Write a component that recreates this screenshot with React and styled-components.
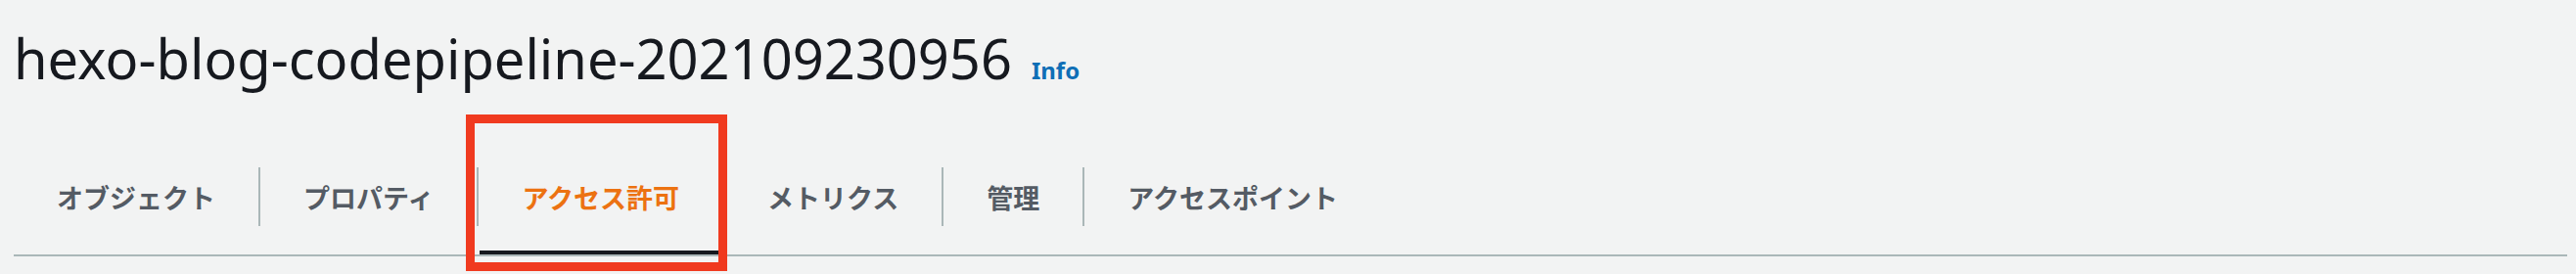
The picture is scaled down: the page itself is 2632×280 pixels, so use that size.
import { Fragment } from 'react';
import styled, { createGlobalStyle } from 'styled-components';

const GlobalStyle = createGlobalStyle`
html, body {
    margin: 0;
    padding: 0;
    background: #f2f3f3;
}
body {
    font-family: "Noto Sans", "Noto Sans CJK JP", sans-serif;
    color: #16191f;
}
`

const Page = styled.div`
width: 2632px;
height: 280px;
box-sizing: border-box;
padding: 0 9px 0 14px;
background: #f2f3f3;
`

const Header = styled.div`
display: flex;
align-items: baseline;
gap: 20px;
height: 142px;
padding-top: 19px;
box-sizing: border-box;
`

const Title = styled.h1`
margin: 0;
font-family: "Noto Sans", sans-serif;
font-size: 56px;
font-weight: 400;
line-height: 80px;
color: #16191f;
`

const InfoLink = styled.a`
font-family: "Noto Sans", sans-serif;
font-size: 24px;
font-weight: 700;
color: #0f6fb6;
text-decoration: none;
`

const TabList = styled.div`
display: flex;
align-items: center;
border-bottom: 2px solid #aab7b8;
height: 120px;
box-sizing: border-box;
`

const Tab = styled.div`
position: relative;
display: flex;
align-items: center;
height: 118px;
padding: 0 44px;
font-family: "Noto Sans CJK JP", sans-serif;
font-size: 27px;
font-weight: 700;
color: ${props => props.$active ? '#ec7211' : '#545b64'};
white-space: nowrap;
&::after {
    content: '';
    display: ${props => props.$active ? 'block' : 'none'};
    position: absolute;
    left: 1px;
    right: 4px;
    bottom: 0;
    height: 4px;
    background: #16191f;
}
`

const Divider = styled.div`
width: 2px;
height: 60px;
background: #aab7b8;
flex-shrink: 0;
`

const Highlight = styled.div`
position: absolute;
left: -13px;
right: -5px;
top: -25px;
bottom: -17px;
border: 9px solid #f03a1f;
pointer-events: none;
`

const tabs = ['オブジェクト', 'プロパティ', 'アクセス許可', 'メトリクス', '管理', 'アクセスポイント']

function App(){
    return (
        <Page>
            <GlobalStyle />
            <Header>
                <Title>hexo-blog-codepipeline-202109230956</Title>
                <InfoLink href="#">Info</InfoLink>
            </Header>
            <TabList>
                {tabs.map((name, i) => (
                    <Fragment key={name}>
                        {i > 0 && <Divider />}
                        <Tab $active={i === 2}>
                            {name}
                            {i === 2 && <Highlight />}
                        </Tab>
                    </Fragment>
                ))}
            </TabList>
        </Page>
    )
}

export default App
